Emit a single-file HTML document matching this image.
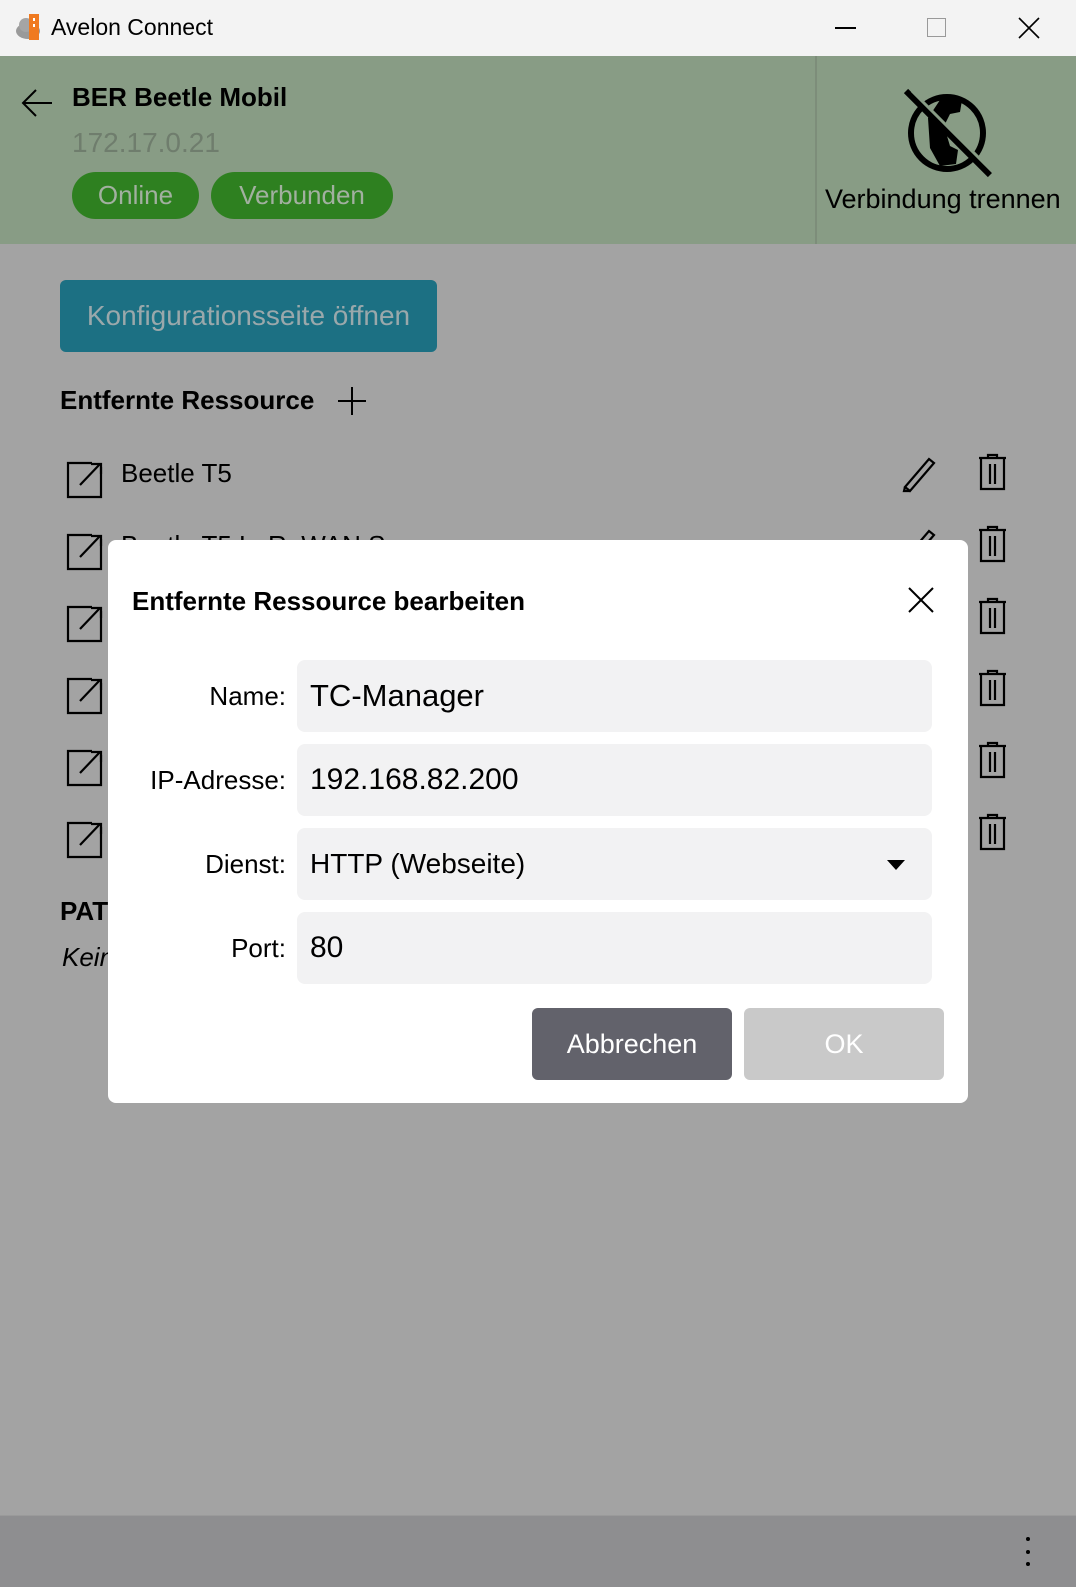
<!DOCTYPE html>
<html><head><meta charset="utf-8"><style>
*{box-sizing:border-box;margin:0;padding:0}
body{width:1076px;height:1587px;overflow:hidden;position:relative;background:#a3a3a3;font-family:"Liberation Sans",Arial,sans-serif;}
.abs{position:absolute}
.title{top:0;left:0;width:1076px;height:56px;background:#f3f3f3}
.hdr{top:56px;left:0;width:1076px;height:188px;background:#889c85}
.t{white-space:nowrap}
.pill{background:#2e8020;color:#a2b0a0;border-radius:24px;height:47px;font-size:26px;line-height:47px;text-align:center}
.row-txt{font-size:26px;color:#000}
.dlg{left:108px;top:540px;width:860px;height:563px;background:#fff;border-radius:8px}
.lbl{font-size:26px;color:#000;text-align:right;width:180px}
.inp{left:297px;width:635px;height:72px;background:#f2f2f3;border-radius:8px;font-size:30px;color:#000;line-height:72px;padding-left:13px}
.btn{height:72px;border-radius:6px;font-size:27px;line-height:72px;text-align:center;color:#fff}
</style></head><body>
<div class="abs title"></div>
<svg class="abs" style="left:14px;top:12px" width="34" height="30" viewBox="0 0 34 30">
<ellipse cx="14" cy="19" rx="12" ry="8" fill="#9a9a9a"/><circle cx="12" cy="13" r="7" fill="#a5a5a5"/>
<rect x="15" y="2" width="10" height="26" fill="#f07a20"/><rect x="19" y="6" width="2" height="3" fill="#fff"/><rect x="19" y="12" width="2" height="3" fill="#fff"/></svg>
<div class="abs t" style="left:51px;top:14px;font-size:23px;color:#000">Avelon Connect</div>
<div class="abs" style="left:835px;top:27px;width:21px;height:1.5px;background:#000"></div>
<div class="abs" style="left:927px;top:18px;width:19px;height:19px;border:1.5px solid #999"></div>
<svg class="abs" style="left:1018px;top:17px" width="22" height="22"><path d="M1 1L21 21M21 1L1 21" stroke="#000" stroke-width="1.6"/></svg>

<div class="abs hdr"></div>
<div class="abs" style="left:815px;top:56px;width:2px;height:188px;background:#7d8d7a"></div>
<svg class="abs" style="left:20px;top:88px" width="34" height="30"><path d="M32 15H3M16 2L3 15L16 28" stroke="#000" stroke-width="2" fill="none"/></svg>
<div class="abs t" style="left:72px;top:82px;font-size:26px;font-weight:bold;color:#000">BER Beetle Mobil</div>
<div class="abs t" style="left:72px;top:127px;font-size:28px;color:#6f7d6d">172.17.0.21</div>
<div class="abs pill" style="left:72px;top:172px;width:127px">Online</div>
<div class="abs pill" style="left:211px;top:172px;width:182px">Verbunden</div>
<svg class="abs" style="left:900px;top:88px" width="95" height="95" viewBox="0 0 95 95">
<circle cx="47" cy="45" r="36" stroke="#000" stroke-width="6" fill="none"/>
<path d="M40 12 L62 12 L60 24 L50 26 L44 38 L50 58 L58 62 L56 76 L40 78 L30 60 L28 30 Z" fill="#000"/>
<path d="M6 3L90 87" stroke="#000" stroke-width="6"/>
<path d="M12 3L94 85" stroke="#889c85" stroke-width="3"/>
</svg>
<div class="abs t" style="left:825px;top:184px;font-size:27px;color:#000">Verbindung trennen</div>

<div class="abs" style="left:60px;top:280px;width:377px;height:72px;background:#1c7083;border-radius:6px;color:#9aa8ab;font-size:28px;line-height:72px;text-align:center">Konfigurationsseite öffnen</div>
<div class="abs t" style="left:60px;top:385px;font-size:26px;font-weight:bold;color:#000">Entfernte Ressource</div>
<svg class="abs" style="left:338px;top:387px" width="28" height="28"><path d="M14 0V28M0 14H28" stroke="#000" stroke-width="2"/></svg>

<svg class="abs" style="left:0;top:0" width="1076" height="900">
<g id="r" fill="none" stroke="#000" stroke-width="2.2">
<path d="M92 463H68V497H101V473M101 467V497"/><path d="M80 485L100 464M91 464H101V474"/>
<path d="M905 487L929 459L934 463L910 491Z"/><path d="M905 487L904 491L910 491"/>
<path d="M979 458H1006M988 458V455H997V458M981 459V489H1004V459M990 464V484M995 464V484"/>
</g>
<use href="#r" y="72"/><use href="#r" y="144"/><use href="#r" y="216"/><use href="#r" y="288"/><use href="#r" y="360"/>
</svg>
<div class="abs t row-txt" style="left:121px;top:458px">Beetle T5</div>
<div class="abs t row-txt" style="left:121px;top:530px">Beetle T5 LoRaWAN Server</div>
<div class="abs t" style="left:60px;top:896px;font-size:26px;font-weight:bold">PATH</div>
<div class="abs t" style="left:62px;top:942px;font-size:26px;font-style:italic">Keine</div>

<div class="abs dlg"></div>
<div class="abs t" style="left:132px;top:586px;font-size:26px;font-weight:bold;color:#000">Entfernte Ressource bearbeiten</div>
<svg class="abs" style="left:908px;top:587px" width="26" height="26"><path d="M1 1L25 25M25 1L1 25" stroke="#000" stroke-width="2"/></svg>
<div class="abs lbl" style="left:106px;top:681px">Name:</div>
<div class="abs lbl" style="left:106px;top:765px">IP-Adresse:</div>
<div class="abs lbl" style="left:106px;top:849px">Dienst:</div>
<div class="abs lbl" style="left:106px;top:933px">Port:</div>
<div class="abs inp" style="top:660px;font-size:31px">TC-Manager</div>
<div class="abs inp" style="top:744px">192.168.82.200</div>
<div class="abs inp" style="top:828px;font-size:28px">HTTP (Webseite)</div>
<svg class="abs" style="left:887px;top:860px" width="18" height="10"><path d="M0 0H18L9 10Z" fill="#000"/></svg>
<div class="abs inp" style="top:912px">80</div>
<div class="abs btn" style="left:532px;top:1008px;width:200px;background:#62626b">Abbrechen</div>
<div class="abs btn" style="left:744px;top:1008px;width:200px;background:#c9c9c9">OK</div>

<div class="abs" style="left:0;top:1515px;width:1076px;height:72px;background:#8e8e90;border-top:1px solid #9a9a9a"></div>
<div class="abs" style="left:1026px;top:1537px;width:4px;height:4px;border-radius:2px;background:#000"></div>
<div class="abs" style="left:1026px;top:1550px;width:4px;height:4px;border-radius:2px;background:#000"></div>
<div class="abs" style="left:1026px;top:1562px;width:4px;height:4px;border-radius:2px;background:#000"></div>
</body></html>
